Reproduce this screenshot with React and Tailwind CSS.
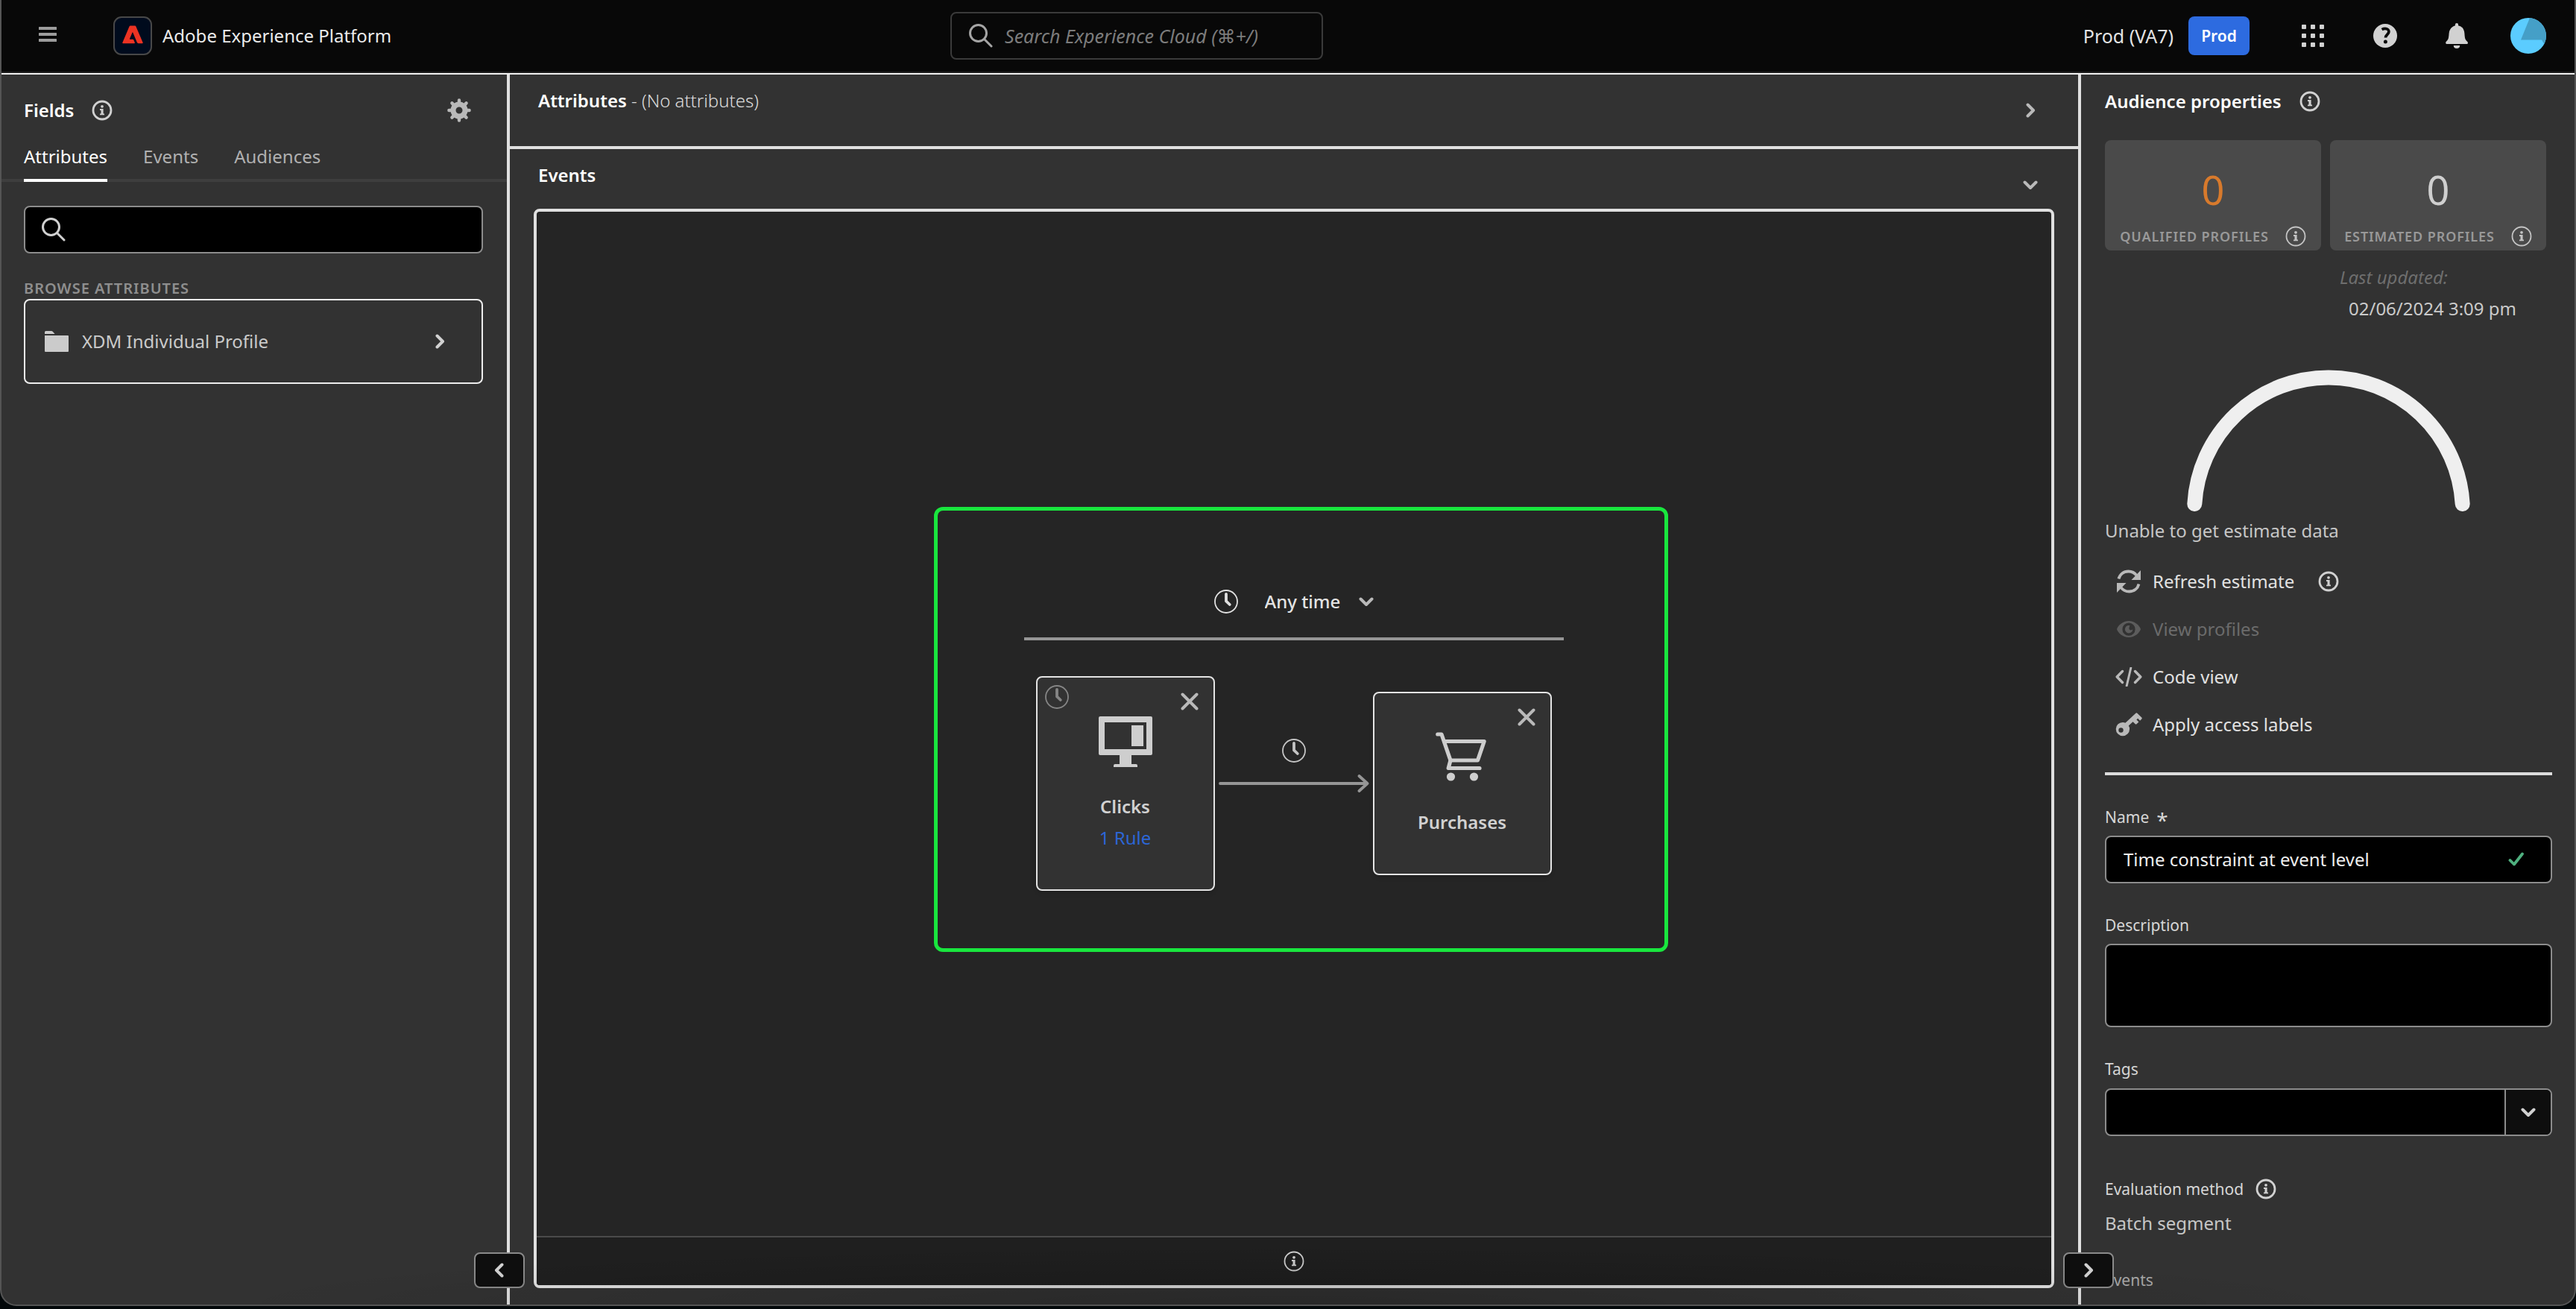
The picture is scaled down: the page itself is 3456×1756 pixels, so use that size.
import React, { useState } from 'react';

/* ---------- icons ---------- */

function InfoIcon({ thin = false, className = 'text-[#d1d1d1]' }) {
  return (
    <svg width="28" height="28" viewBox="0 0 28 28" fill="none" className={`shrink-0 ${className}`} aria-hidden="true">
      <circle cx="14" cy="14" r={thin ? 12.5 : 12} stroke="currentColor" strokeWidth={thin ? 1.8 : 2.8} />
      <circle cx="14" cy="8.8" r="1.9" fill="currentColor" />
      <path d="M11 12h4.6v6.4H17v1.9h-6v-1.9h1.5V13.9H11z" fill="currentColor" />
    </svg>
  );
}

function Chevron({ dir = 'right', className = 'text-[#b9b9b9]' }) {
  const d = {
    right: 'M6.5 2.5 14 10l-7.5 7.5',
    left: 'M13.5 2.5 6 10l7.5 7.5',
    down: 'M2.5 6.5 10 14l7.5-7.5',
  }[dir];
  return (
    <svg width="20" height="20" viewBox="0 0 20 20" fill="none" className={`shrink-0 ${className}`} aria-hidden="true">
      <path d={d} stroke="currentColor" strokeWidth="4" strokeLinecap="round" strokeLinejoin="round" />
    </svg>
  );
}

function SearchIcon({ className, stroke = 3 }) {
  return (
    <svg width="32" height="32" viewBox="0 0 32 32" fill="none" className={`shrink-0 ${className}`} aria-hidden="true">
      <circle cx="12.5" cy="12.5" r="11" stroke="currentColor" strokeWidth={stroke} />
      <path d="M20.5 20.5 30 30" stroke="currentColor" strokeWidth={stroke} strokeLinecap="round" />
    </svg>
  );
}

function ClockIcon({ className = 'text-[#cfcfcf]' }) {
  return (
    <svg width="32" height="32" viewBox="0 0 32 32" fill="none" className={`shrink-0 ${className}`} aria-hidden="true">
      <circle cx="16" cy="16" r="15" stroke="currentColor" strokeWidth="1.8" />
      <path d="M16 6v9.4l4.8 4.6" stroke="currentColor" strokeWidth="3.8" strokeLinecap="round" strokeLinejoin="round" />
    </svg>
  );
}

function CloseIcon() {
  return (
    <svg width="24" height="24" viewBox="0 0 24 24" fill="none" aria-hidden="true">
      <path d="M2.5 2.5l19 19M21.5 2.5l-19 19" stroke="#b9b9b9" strokeWidth="4" strokeLinecap="round" />
    </svg>
  );
}

function MenuIcon() {
  return (
    <svg width="24" height="32" viewBox="0 0 24 32" fill="#9c9c9c" aria-hidden="true">
      <rect y="4" width="24" height="4" rx="0.5" />
      <rect y="12" width="24" height="4" rx="0.5" />
      <rect y="20" width="24" height="4" rx="0.5" />
    </svg>
  );
}

function AdobeLogo() {
  return (
    <span className="flex h-[52px] w-[52px] items-center justify-center rounded-[11px] border-2 border-[#484848] bg-[#000b1d]">
      <svg width="28" height="25" viewBox="0 0 28 25" aria-hidden="true" className="mb-1">
        <path
          fill="#ec3323"
          d="M11 0.4h6q1 0 1.4 1L27.6 23q.5 1.2-.8 1.2H21.6q-1.2 0-1.7-1.1L14.2 9.6q-.3-.6-.6 0L10 18.1q-.2.6.4.6h3.8q.8 0 1.1.7l1.5 3.7q.4 1.1-.7 1.1H1.1q-1.2 0-.7-1.2L9.5 1.4q.4-1 1.5-1z"
        />
      </svg>
    </span>
  );
}

function GearIcon() {
  return (
    <svg width="32" height="32" viewBox="0 0 32 32" fill="none" aria-hidden="true">
      <circle cx="16" cy="16" r="8" stroke="#b9b9b9" strokeWidth="7" />
      <path
        d="M16 6V2.4M16 26v3.6M6 16H2.4M26 16h3.6M9 9 6.4 6.4M23 23l2.6 2.6M9 23l-2.6 2.6M23 9l2.6-2.6"
        stroke="#b9b9b9"
        strokeWidth="4.4"
        strokeLinecap="round"
      />
    </svg>
  );
}

function FolderIcon() {
  return (
    <svg width="32" height="28" viewBox="0 0 32 28" fill="#cbcbcb" aria-hidden="true" className="shrink-0">
      <path d="M0 4V1.6Q0 0 1.6 0H9q1 0 1.7.8L13.6 4z" />
      <path d="M0 6h31q1 0 1 1v20q0 1-1 1H1q-1 0-1-1z" />
    </svg>
  );
}

function GridIcon() {
  const c = [1, 13, 25];
  return (
    <svg width="32" height="32" viewBox="0 0 32 32" fill="#d1d1d1" aria-hidden="true">
      {c.map((y) => c.map((x) => <rect key={`${x}-${y}`} x={x} y={y} width="6" height="6" rx="1" />))}
    </svg>
  );
}

function HelpIcon() {
  return (
    <svg width="32" height="32" viewBox="0 0 32 32" fill="none" aria-hidden="true">
      <circle cx="16" cy="16" r="16" fill="#d1d1d1" />
      <path d="M11.6 7.6Q13.6 6.4 16 6.4c3 0 4.9 1.7 4.9 4.2 0 3.6-4.4 4.2-4.4 8" stroke="#080808" strokeWidth="3.8" />
      <circle cx="16.4" cy="24" r="2.5" fill="#080808" />
    </svg>
  );
}

function BellIcon() {
  return (
    <svg width="30" height="36" viewBox="0 0 30 36" fill="#d1d1d1" aria-hidden="true">
      <path d="M13 2.6Q13 1 15 1t2 1.6v1.6q7.6 1.6 8.4 10.6c.5 7 .8 8.4 4 11.2.9 1 .6 3-.6 3H1.2q-1.6-1-.6-3c3.2-2.8 3.5-4.2 4-11.2.8-9 8.4-10.6 8.4-10.6z" />
      <path d="M10.8 31h8.4a4.2 4 0 0 1-8.4 0z" />
    </svg>
  );
}

function Avatar() {
  return (
    <svg width="48" height="48" viewBox="0 0 48 48" aria-hidden="true">
      <circle cx="24" cy="24" r="24" fill="#5bccff" />
      <path d="M26 .1A24 24 0 0 1 45.2 35L42 29.5H14z" fill="#459fc7" />
    </svg>
  );
}

function RefreshIcon() {
  return (
    <svg width="32" height="32" viewBox="0 0 32 32" fill="none" aria-hidden="true">
      <path d="M2.5 12.5C4 6.5 9 2.5 15.5 2.5c4.5 0 8.5 2 11 5.5" stroke="#b9b9b9" strokeWidth="3.8" />
      <path d="M32 1v13H19.5z" fill="#b9b9b9" />
      <path d="M29.5 19.5c-1.5 6-6.5 10-13 10-4.5 0-8.5-2-11-5.5" stroke="#b9b9b9" strokeWidth="3.8" />
      <path d="M0 31V18h12.5z" fill="#b9b9b9" />
    </svg>
  );
}

function EyeIcon() {
  return (
    <svg width="32" height="24" viewBox="0 0 32 24" fill="none" aria-hidden="true">
      <path
        fill="#5c5c5c"
        fillRule="evenodd"
        d="M16 1C24 1 30.5 7 32 12 30.5 17 24 23 16 23S1.5 17 0 12C1.5 7 8 1 16 1zm0 2.6a8.6 8.6 0 1 0 0 17.2 8.6 8.6 0 1 0 0-17.2z"
      />
      <path d="M16.5 7a5.2 5.2 0 1 0 4.7 4.4 2.4 2.4 0 0 1-4.7-1.2c0-1.2.4-2 1-2.8z" fill="#5c5c5c" />
    </svg>
  );
}

function CodeIcon() {
  return (
    <svg width="36" height="26" viewBox="0 0 36 26" fill="none" stroke="#b9b9b9" aria-hidden="true">
      <path d="M9.5 5.5 2.2 13l7.3 7.5M26.5 5.5l7.3 7.5-7.3 7.5" strokeWidth="3.4" strokeLinecap="round" strokeLinejoin="round" />
      <path d="M20.8 1 15.2 25" strokeWidth="3" strokeLinecap="round" />
    </svg>
  );
}

function KeyIcon() {
  return (
    <svg width="36" height="32" viewBox="0 0 36 32" fill="none" aria-hidden="true">
      <path
        fill="#b9b9b9"
        fillRule="evenodd"
        d="M27.4.7q1-.9 1.9 0l6 5.9q.9 1 0 1.9l-2.2 2.2-3-3-1.7 1.7 3 3-2.9 2.9q-.9.8-1.8 0l-3.2-3.1-5.7 5.4q1.3 2 1.3 4.5a9.2 9.2 0 1 1-9.2-9.2q1.9 0 3.5.8zM7.5 20.3a3.2 3.2 0 1 0 0 6.4 3.2 3.2 0 1 0 0-6.4z"
      />
    </svg>
  );
}

function MonitorIcon() {
  return (
    <svg width="72" height="68" viewBox="0 0 72 68" fill="#cecece" aria-hidden="true">
      <path fillRule="evenodd" d="M2 0h68q2 0 2 2v48q0 2-2 2H44v12h6q2 0 2 2v2H20v-2q0-2 2-2h6V52H2q-2 0-2-2V2Q0 0 2 0zm6 8v36h56V8z" />
      <path d="M44 12h16v28H44z" />
    </svg>
  );
}

function CartIcon() {
  return (
    <svg width="72" height="68" viewBox="0 0 72 68" fill="none" stroke="#cecece" strokeWidth="5.2" strokeLinecap="round" strokeLinejoin="round" aria-hidden="true">
      <path d="M2.8 3H8l12 35-2.8 10.5H59" />
      <path d="M11.5 12.5h53.7L56.5 38H20" />
      <circle cx="20.5" cy="60" r="5.6" fill="#cecece" stroke="none" />
      <circle cx="51.5" cy="60" r="5.6" fill="#cecece" stroke="none" />
    </svg>
  );
}

function ArrowLine() {
  return (
    <svg width="202" height="24" viewBox="0 0 202 24" fill="none" stroke="#969696" strokeWidth="3.8" strokeLinecap="round" strokeLinejoin="round" aria-hidden="true">
      <path d="M2 12h197M188.5 2 199.5 12l-11 10" />
    </svg>
  );
}

/* ---------- header ---------- */

function Header() {
  return (
    <header className="grid h-[98px] shrink-0 grid-cols-[1273fr_500px_1679fr] items-center border-b-2 border-[#1f1f1f] bg-[#080808]">
      <div className="flex items-center pl-[50px]">
        <button type="button" aria-label="Menu">
          <MenuIcon />
        </button>
        <a href="#home" className="ml-[76px] flex items-center gap-[14px] text-[24px] leading-9 text-[#ebebeb]">
          <AdobeLogo />
          Adobe Experience Platform
        </a>
      </div>
      <label className="flex h-16 items-center gap-4 rounded-lg border-2 border-[#3a3a3a] px-[23px]">
        <SearchIcon className="text-[#a5a5a5]" />
        <input
          type="search"
          aria-label="Search Experience Cloud"
          placeholder="Search Experience Cloud (⌘+/)"
          className="w-full min-w-0 bg-transparent text-[25px] leading-9 text-white italic outline-none placeholder:text-[#7c7c7c]"
        />
      </label>
      <div className="flex items-center justify-end pr-[38px]">
        <span className="text-[25px] leading-9 text-[#e3e3e3]">Prod (VA7)</span>
        <button type="button" className="ml-5 h-[52px] w-[82px] rounded-lg bg-[#2d6be0] text-[21px] leading-8 font-semibold text-white">
          Prod
        </button>
        <button type="button" aria-label="Apps" className="ml-[69px]">
          <GridIcon />
        </button>
        <button type="button" aria-label="Help" className="ml-[65px]">
          <HelpIcon />
        </button>
        <button type="button" aria-label="Notifications" className="ml-[65px]">
          <BellIcon />
        </button>
        <button type="button" aria-label="Account" className="ml-[57px]">
          <Avatar />
        </button>
      </div>
    </header>
  );
}

/* ---------- left rail ---------- */

const TABS = ['Attributes', 'Events', 'Audiences'];

function CollapseButton({ dir, label, className }) {
  return (
    <button
      type="button"
      aria-label={label}
      className={`absolute bottom-[22px] z-10 flex h-12 w-[68px] items-center justify-center rounded-lg border-2 border-[#8a8a8a] bg-[#0e0e0e] ${className}`}
    >
      <Chevron dir={dir} className="text-[#d1d1d1]" />
    </button>
  );
}

function FieldsPanel() {
  const [tab, setTab] = useState('Attributes');
  return (
    <aside className="relative w-[682px] shrink-0 border-r-4 border-[#e0e0e0]">
      <div className="mt-8 flex h-8 items-center pr-12 pl-[30px]">
        <h2 className="text-[24px] leading-8 font-semibold text-white">Fields</h2>
        <button type="button" aria-label="About fields" className="ml-6">
          <InfoIcon />
        </button>
        <button type="button" aria-label="Settings" className="ml-auto">
          <GearIcon />
        </button>
      </div>
      <div role="tablist" className="mt-7 flex gap-12 border-b-4 border-[#3e3e3e] pl-[30px]">
        {TABS.map((t) => (
          <button
            key={t}
            type="button"
            role="tab"
            aria-selected={tab === t}
            onClick={() => setTab(t)}
            className={`-mb-1 border-b-4 pb-3 text-[24px] leading-9 ${
              tab === t ? 'border-white text-white' : 'border-transparent text-[#b0b0b0]'
            }`}
          >
            {t}
          </button>
        ))}
      </div>
      <div className="pt-8 pr-8 pl-[30px]">
        <label className="flex h-16 items-center gap-4 rounded-lg border-2 border-[#8c8c8c] bg-black px-[22px]">
          <SearchIcon className="text-[#d1d1d1]" />
          <input type="search" aria-label="Search attributes" className="w-full min-w-0 bg-transparent text-[24px] text-white outline-none" />
        </label>
        <h3 className="mt-8 text-[20px] leading-[29px] font-semibold tracking-wider text-[#8e8e8e]">BROWSE ATTRIBUTES</h3>
        <button type="button" className="flex h-[114px] w-full items-center gap-[18px] rounded-lg border-2 border-[#ededed] pr-[46px] pl-[26px] text-left">
          <FolderIcon />
          <span className="flex-1 text-[24px] leading-9 text-[#cacaca]">XDM Individual Profile</span>
          <Chevron className="text-[#d1d1d1]" />
        </button>
      </div>
      <CollapseButton dir="left" label="Collapse left panel" className="right-[-24px]" />
    </aside>
  );
}

/* ---------- canvas ---------- */

function EventCard({ name, icon, rule, constrained }) {
  return (
    <article className="relative flex w-60 flex-col items-center rounded-lg border-2 border-[#e4e4e4] bg-[#323232] pt-[52px] pb-12 text-[24px] shadow-md">
      {constrained && (
        <button type="button" aria-label="Time constraint" className="absolute top-[10px] left-[10px]">
          <ClockIcon className="text-[#858585]" />
        </button>
      )}
      <button type="button" aria-label={`Remove ${name}`} className="absolute top-5 right-5">
        <CloseIcon />
      </button>
      {icon}
      <h4 className="mt-8 leading-[42px] font-semibold text-[#d1d1d1]">{name}</h4>
      {rule && (
        <a href="#rule" className="leading-[42px] text-[#2c66d6]">
          {rule}
        </a>
      )}
    </article>
  );
}

function EventCanvas() {
  return (
    <div className="mx-8 mb-[22px] flex flex-1 flex-col overflow-hidden rounded-lg border-4 border-[#e0e0e0] bg-[#252525]">
      <div className="flex flex-1 items-center justify-center pt-[14px] pl-[18px]">
        <section className="rounded-xl border-[5px] border-[#19e63e] pt-[106px] pr-[135px] pb-[77px] pl-[116px]">
          <div className="flex h-8 items-center justify-center">
            <ClockIcon className="text-[#e0e0e0]" />
            <label className="ml-9 flex items-center gap-6">
              <select aria-label="Time range" className="appearance-none bg-transparent text-[24px] leading-8 font-medium text-[#e3e3e3] outline-none">
                <option>Any time</option>
              </select>
              <Chevron dir="down" />
            </label>
          </div>
          <hr className="mt-8 h-1 w-[724px] border-0 bg-[#969696]" />
          <div className="mt-12 flex items-center justify-center">
            <EventCard name="Clicks" icon={<MonitorIcon />} rule="1 Rule" constrained />
            <div className="flex w-[212px] flex-col items-center gap-4 pb-12">
              <button type="button" aria-label="Time between events">
                <ClockIcon className="text-[#c4c4c4]" />
              </button>
              <ArrowLine />
            </div>
            <EventCard name="Purchases" icon={<CartIcon />} />
          </div>
        </section>
      </div>
      <footer className="flex h-[66px] shrink-0 items-center justify-center border-t-2 border-[#4a4a4a] bg-[#1f1f1f]">
        <button type="button" aria-label="Canvas information">
          <InfoIcon thin />
        </button>
      </footer>
    </div>
  );
}

function Builder() {
  return (
    <main className="flex min-w-0 flex-1 flex-col">
      <section className="flex h-[100px] shrink-0 items-start border-b-4 border-[#e0e0e0] pr-[54px] pl-[38px]">
        <h2 className="mt-[17px] text-[24px] leading-9 font-semibold text-white">
          Attributes <span className="font-light text-[#dcdcdc]">- (No attributes)</span>
        </h2>
        <button type="button" aria-label="Expand attributes" className="mt-8 ml-auto flex h-8 items-center">
          <Chevron />
        </button>
      </section>
      <section className="flex h-20 shrink-0 items-start pr-[54px] pl-[38px]">
        <h2 className="mt-[17px] text-[24px] leading-9 font-semibold text-white">Events</h2>
        <button type="button" aria-label="Collapse events" className="mt-8 ml-auto flex h-8 items-center">
          <Chevron dir="down" />
        </button>
      </section>
      <EventCanvas />
    </main>
  );
}

/* ---------- right rail ---------- */

function StatCard({ value, label, valueClass }) {
  return (
    <div className="flex h-[148px] flex-1 flex-col items-center rounded-lg bg-[#4a4a4a] pt-[38px]">
      <span className={`text-[54px] leading-[56px] ${valueClass}`}>{value}</span>
      <span className="mt-[21px] flex items-center gap-[22px] text-[18px] leading-7 font-semibold tracking-wider text-[#999999]">
        {label}
        <InfoIcon thin className="text-[#c4c4c4]" />
      </span>
    </div>
  );
}

function ActionRow({ icon, label, disabled, info }) {
  return (
    <div className="flex h-16 items-center pl-[14px]">
      <button
        type="button"
        disabled={disabled}
        className={`flex items-center gap-[14px] text-[24px] leading-9 ${disabled ? 'text-[#6b6b6b]' : 'text-[#e1e1e1]'}`}
      >
        <span className="flex w-9 justify-center">{icon}</span>
        {label}
      </button>
      {info && (
        <button type="button" aria-label={`About ${label}`} className="ml-8">
          <InfoIcon />
        </button>
      )}
    </div>
  );
}

const LABEL = 'text-[21px] leading-8 text-[#d6d6d6]';
const FIELD = 'rounded-lg border-2 border-[#8c8c8c] bg-black text-[24px] leading-9 text-[#ededed]';

function PropertiesPanel() {
  return (
    <aside className="relative w-[666px] shrink-0 border-l-4 border-[#e0e0e0]">
      <div className="flex flex-col pt-4 pr-[30px] pl-8">
        <div className="flex items-center gap-6">
          <h2 className="text-[24px] leading-10 font-semibold text-white">Audience properties</h2>
          <button type="button" aria-label="About audience properties">
            <InfoIcon />
          </button>
        </div>

        <div className="mt-8 flex gap-3 pr-2">
          <StatCard value="0" label="QUALIFIED PROFILES" valueClass="text-[#d87a2c]" />
          <StatCard value="0" label="ESTIMATED PROFILES" valueClass="text-[#cfcfcf]" />
        </div>
        <div className="mt-[15px] w-[285px] self-end text-[24px] leading-[42px]">
          <p className="text-[#6e6e6e] italic">Last updated:</p>
          <p className="pl-3 text-[#cacaca]">02/06/2024 3:09 pm</p>
        </div>

        <svg width="380" height="190" viewBox="0 0 380 190" fill="none" className="mt-[61px] self-center" aria-hidden="true">
          <path d="M10.3 180A180 180 0 0 1 369.7 180" stroke="#efefef" strokeWidth="20" strokeLinecap="round" />
        </svg>
        <p className="mt-2 text-[24px] leading-9 text-[#c6c6c6]">Unable to get estimate data</p>

        <div className="mt-[18px]">
          <ActionRow icon={<RefreshIcon />} label="Refresh estimate" info />
          <ActionRow icon={<EyeIcon />} label="View profiles" disabled />
          <ActionRow icon={<CodeIcon />} label="Code view" />
          <ActionRow icon={<KeyIcon />} label="Apply access labels" />
        </div>
        <hr className="mt-8 h-1 border-0 bg-[#dcdcdc]" />

        <label htmlFor="name" className={`mt-10 flex h-8 gap-[10px] ${LABEL}`}>
          Name <span className="text-[28px] leading-10">*</span>
        </label>
        <div className={`mt-[9px] flex h-16 items-center pr-[35px] pl-[23px] ${FIELD}`}>
          <input id="name" defaultValue="Time constraint at event level" className="min-w-0 flex-1 bg-transparent outline-none" />
          <svg width="22" height="20" viewBox="0 0 22 20" fill="none" aria-hidden="true">
            <path d="M2.5 11 8 16.5 19 2.5" stroke="#4fb07f" strokeWidth="3.8" strokeLinecap="round" strokeLinejoin="round" />
          </svg>
        </div>

        <label htmlFor="description" className={`mt-10 ${LABEL}`}>
          Description
        </label>
        <textarea id="description" className={`mt-[9px] block h-[112px] resize-none px-[23px] py-3 outline-none ${FIELD}`} />

        <label htmlFor="tags" className={`mt-10 ${LABEL}`}>
          Tags
        </label>
        <div className={`mt-[10px] flex h-16 overflow-hidden ${FIELD}`}>
          <input id="tags" role="combobox" aria-expanded="false" className="min-w-0 flex-1 bg-transparent px-[23px] outline-none" />
          <button type="button" aria-label="Show tags" className="flex w-[62px] items-center justify-center border-l-2 border-[#8c8c8c] bg-[#0e0e0e]">
            <Chevron dir="down" className="text-[#d1d1d1]" />
          </button>
        </div>

        <div className="mt-[55px] flex items-center gap-4">
          <h3 className={LABEL}>Evaluation method</h3>
          <button type="button" aria-label="About evaluation method">
            <InfoIcon />
          </button>
        </div>
        <p className="mt-3 text-[24px] leading-9 text-[#c6c6c6]">Batch segment</p>
        <p className="mt-[42px] text-[21px] leading-8 text-[#a8a8a8]">Events</p>
      </div>
      <CollapseButton dir="right" label="Collapse right panel" className="left-[-24px]" />
    </aside>
  );
}

/* ---------- page ---------- */

export default function App() {
  return (
    <div className="h-screen min-h-[1000px] overflow-hidden bg-[#03080a] pb-1 font-['Noto_Sans','DejaVu_Sans',sans-serif] antialiased">
      <div className="relative flex h-full flex-col overflow-hidden rounded-b-[22px] border-x-2 border-b-2 border-[#555555] bg-[#323232]">
        <Header />
        <div className="flex min-h-0 flex-1 border-t-2 border-[#f0f0f0]">
          <FieldsPanel />
          <Builder />
          <PropertiesPanel />
        </div>
        <div className="pointer-events-none absolute inset-x-0 bottom-0 z-20 h-20 bg-[radial-gradient(42%_100%_at_50%_100%,rgba(0,0,0,0.2),transparent)]" />
      </div>
    </div>
  );
}
